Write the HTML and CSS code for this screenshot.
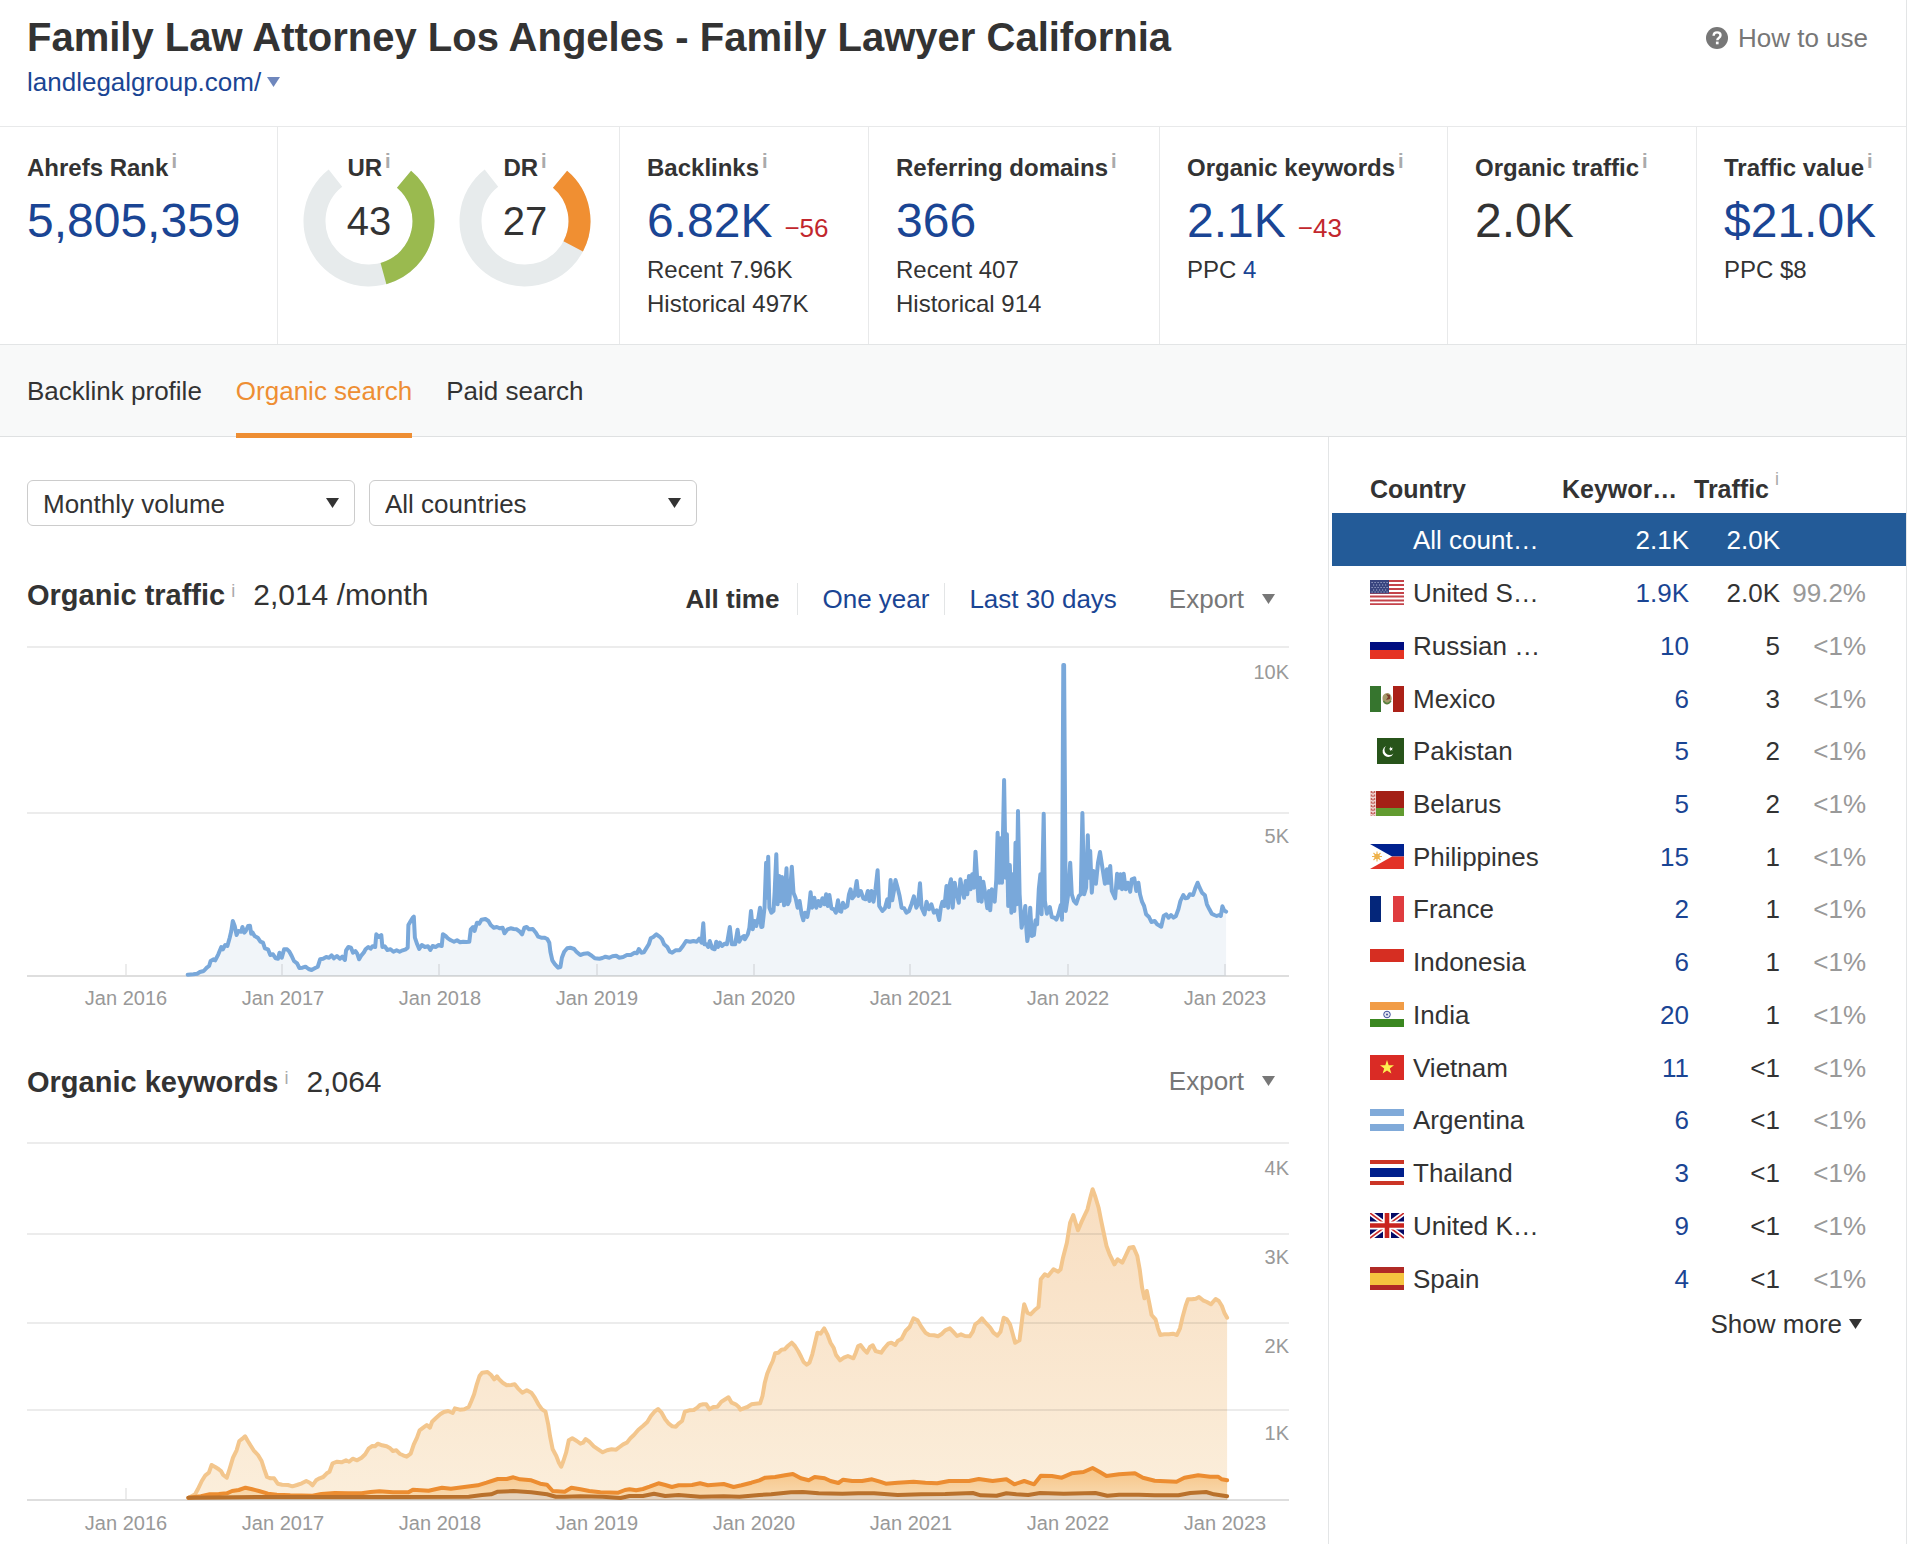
FILE: index.html
```html
<!DOCTYPE html>
<html lang="en">
<head>
<meta charset="utf-8">
<meta name="viewport" content="width=device-width, initial-scale=1">
<title>Family Law Attorney Los Angeles - Family Lawyer California</title>
<link rel="stylesheet" href="styles.css">
</head>
<body>
<div class="page">
  <header class="head">
    <div>
      <h1 class="title">Family Law Attorney Los Angeles - Family Lawyer California</h1>
      <a class="domain" href="#">landlegalgroup.com/ <svg class="caret" viewBox="0 0 13 10" aria-hidden="true"><path d="M0 0H13L6.500 10Z"/></svg></a>
    </div>
    <a class="help" href="#">
      <svg class="help-icon" viewBox="0 0 22 22" aria-hidden="true"><circle cx="11" cy="11" r="11" fill="#777"/><path d="M7.600 8.700C7.700 6.600 9 5.400 11.100 5.400C13.200 5.400 14.500 6.600 14.500 8.200C14.500 9.500 13.800 10.200 12.800 10.900C11.800 11.600 11.300 12 11.300 13.200" fill="none" stroke="#fff" stroke-width="2.400"/><rect x="9.900" y="14.600" width="2.700" height="2.700" fill="#fff"/></svg>
      How to use
    </a>
  </header>

  <section class="stats" aria-label="Overview">
    <div class="stat">
      <h2 class="label">Ahrefs Rank<sup class="info">i</sup></h2>
      <a class="value" href="#">5,805,359</a>
    </div>
    <div class="stat gauges">
      <div class="gauge">
        <svg class="ring" viewBox="0 0 132 136" aria-hidden="true"><path class="track" d="M101.030 26.250A54.500 54.500 0 1 1 32.450 25.050"/><path class="ur" d="M101.030 26.250A54.500 54.500 0 0 1 80.470 120.540"/></svg>
        <h2 class="label">UR<sup class="info">i</sup></h2>
        <span class="score">43</span>
      </div>
      <div class="gauge">
        <svg class="ring" viewBox="0 0 132 136" aria-hidden="true"><path class="track" d="M101.030 26.250A54.500 54.500 0 1 1 32.450 25.050"/><path class="dr" d="M101.030 26.250A54.500 54.500 0 0 1 114.200 93.400"/></svg>
        <h2 class="label">DR<sup class="info">i</sup></h2>
        <span class="score">27</span>
      </div>
    </div>
    <div class="stat">
      <h2 class="label">Backlinks<sup class="info">i</sup></h2>
      <div class="figure"><a class="value" href="#">6.82K</a><span class="drop">−56</span></div>
      <p class="note">Recent 7.96K</p>
      <p class="note">Historical 497K</p>
    </div>
    <div class="stat">
      <h2 class="label">Referring domains<sup class="info">i</sup></h2>
      <a class="value" href="#">366</a>
      <p class="note">Recent 407</p>
      <p class="note">Historical 914</p>
    </div>
    <div class="stat">
      <h2 class="label">Organic keywords<sup class="info">i</sup></h2>
      <div class="figure"><a class="value" href="#">2.1K</a><span class="drop">−43</span></div>
      <p class="note">PPC <a href="#">4</a></p>
    </div>
    <div class="stat">
      <h2 class="label">Organic traffic<sup class="info">i</sup></h2>
      <span class="value plain">2.0K</span>
    </div>
    <div class="stat">
      <h2 class="label">Traffic value<sup class="info">i</sup></h2>
      <a class="value" href="#">$21.0K</a>
      <p class="note">PPC $8</p>
    </div>
  </section>

  <nav class="tabs" aria-label="Reports">
    <a class="tab" href="#">Backlink profile</a>
    <a class="tab active" href="#" aria-current="page">Organic search</a>
    <a class="tab" href="#">Paid search</a>
  </nav>

  <div class="body">
    <main class="main">
      <form class="filters">
        <div class="picker">
          <select class="select" aria-label="Volume"><option>Monthly volume</option></select>
          <svg class="caret" viewBox="0 0 13 10" aria-hidden="true"><path d="M0 0H13L6.500 10Z"/></svg>
        </div>
        <div class="picker">
          <select class="select" aria-label="Country"><option>All countries</option></select>
          <svg class="caret" viewBox="0 0 13 10" aria-hidden="true"><path d="M0 0H13L6.500 10Z"/></svg>
        </div>
      </form>

      <section class="panel">
        <div class="panel-head with-ranges">
          <h2 class="heading">Organic traffic<sup class="info light">i</sup></h2>
          <span class="total">2,014 /month</span>
          <div class="tools">
            <div class="ranges">
              <button type="button" class="range current">All time</button>
              <button type="button" class="range">One year</button>
              <button type="button" class="range">Last 30 days</button>
            </div>
            <button type="button" class="export">Export <svg class="caret" viewBox="0 0 13 10" aria-hidden="true"><path d="M0 0H13L6.500 10Z"/></svg></button>
          </div>
        </div>
        <svg class="chart" viewBox="0 0 1262 380" role="img" aria-label="Organic traffic over time">
          <path class="area-traffic" data-area="traffic"/>
          <path class="grid" d="M0 6H1262M0 172H1262"/>
          <path class="axis" d="M0 335H1262"/>
          <path class="ticks" d="M99 323V334M255 323V334M412 323V334M570 323V334M727 323V334M883 323V334M1041 323V334M1198 323V334"/>
          <path class="line-traffic" data-line="traffic"/>
          <g class="y-labels"><text x="1262" y="38">10K</text><text x="1262" y="202">5K</text></g>
          <g class="x-labels"><text x="99" y="364">Jan 2016</text><text x="256" y="364">Jan 2017</text><text x="413" y="364">Jan 2018</text><text x="570" y="364">Jan 2019</text><text x="727" y="364">Jan 2020</text><text x="884" y="364">Jan 2021</text><text x="1041" y="364">Jan 2022</text><text x="1198" y="364">Jan 2023</text></g>
        </svg>
      </section>

      <section class="panel">
        <div class="panel-head">
          <h2 class="heading">Organic keywords<sup class="info light">i</sup></h2>
          <span class="total">2,064</span>
          <div class="tools">
            <button type="button" class="export">Export <svg class="caret" viewBox="0 0 13 10" aria-hidden="true"><path d="M0 0H13L6.500 10Z"/></svg></button>
          </div>
        </div>
        <svg class="chart" viewBox="0 0 1262 402" role="img" aria-label="Organic keywords over time">
          <defs>
            <linearGradient id="fade" x1="0" y1="0" x2="0" y2="1"><stop offset="0" stop-color="#f8dec1"/><stop offset="1" stop-color="#fbeedb"/></linearGradient>
            <linearGradient id="fade-mid" x1="0" y1="0" x2="0" y2="1"><stop offset="0" stop-color="#f6c384"/><stop offset="1" stop-color="#f9dcb4"/></linearGradient>
          </defs>
          <path fill="url(#fade)" data-area="all"/>
          <path fill="url(#fade-mid)" data-area="top10"/>
          <path fill="#e6d3bd" data-area="top3"/>
          <path class="grid" d="M0 6H1262M0 97H1262M0 186H1262M0 273H1262"/>
          <path class="axis" d="M0 363H1262"/>
          <path class="ticks" d="M99 351V362"/>
          <path class="line-all" data-line="all"/>
          <path class="line-top10" data-line="top10"/>
          <path class="line-top3" data-line="top3"/>
          <g class="y-labels"><text x="1262" y="38">4K</text><text x="1262" y="127">3K</text><text x="1262" y="216">2K</text><text x="1262" y="303">1K</text></g>
          <g class="x-labels"><text x="99" y="393">Jan 2016</text><text x="256" y="393">Jan 2017</text><text x="413" y="393">Jan 2018</text><text x="570" y="393">Jan 2019</text><text x="727" y="393">Jan 2020</text><text x="884" y="393">Jan 2021</text><text x="1041" y="393">Jan 2022</text><text x="1198" y="393">Jan 2023</text></g>
        </svg>
      </section>
    </main>

    <aside class="side">
      <table class="countries">
        <colgroup><col class="c-name"><col class="c-kw"><col class="c-tr"><col></colgroup>
        <thead>
          <tr><th class="th-name">Country</th><th>Keywor…</th><th class="th-tr" colspan="2">Traffic<sup class="info light high">i</sup></th></tr>
        </thead>
        <tbody>
          <tr class="selected"><td class="name"><span class="all">All count…</span></td><td class="num">2.1K</td><td class="num">2.0K</td><td></td></tr>
          <tr><td class="name"><svg class="flag" viewBox="0 0 34 26"><rect width="34" height="25" fill="#fff"/><path d="M0 1H34M0 5H34M0 9H34M0 13H34M0 16.500H34M0 20.500H34M0 24.200H34" stroke="#c4434a" stroke-width="1.800"/><rect width="19" height="13.500" fill="#39457f"/><path d="M1.500 2.500H18M3 5H18M1.500 7.500H18M3 10H18M1.500 12H18" stroke="#a9b0d0" stroke-width="1" stroke-dasharray="1.200 1.800"/></svg>United S…</td><td class="num"><a href="#">1.9K</a></td><td class="num">2.0K</td><td class="pct">99.2%</td></tr>
          <tr><td class="name"><svg class="flag" viewBox="0 0 34 26"><rect width="34" height="9" fill="#fff"/><rect y="9" width="34" height="8" fill="#000d80"/><rect y="17" width="34" height="9" fill="#e53323"/></svg>Russian …</td><td class="num"><a href="#">10</a></td><td class="num">5</td><td class="pct">&lt;1%</td></tr>
          <tr><td class="name"><svg class="flag" viewBox="0 0 34 26"><rect width="34" height="26" fill="#fff"/><rect width="11" height="26" fill="#36752e"/><rect x="23" width="11" height="26" fill="#ab2118"/><path d="M12.500 12C12.500 8 16 7 18 7C21.500 8 22 12 21.500 14C20 18.500 17 19 15 18C13 17 12.500 14 12.500 12Z" fill="#a59a6b"/><path d="M16 8L20 9L20 13L16 14L18 11Z" fill="#7c3f2c"/><path d="M13.500 15Q17 20 21 15" fill="none" stroke="#53823f" stroke-width="1.400"/></svg>Mexico</td><td class="num"><a href="#">6</a></td><td class="num">3</td><td class="pct">&lt;1%</td></tr>
          <tr><td class="name"><svg class="flag" viewBox="0 0 34 26"><rect x="7" width="27" height="26" fill="#27541a"/><path d="M16 8A5.700 5.700 0 1 0 23.500 15.500A5.200 5.200 0 1 1 16 8Z" fill="#fff"/><path d="M20.500 8.500L21.300 10L23 9.700L21.900 11L22.600 12.400L21.100 11.900L20.100 13L20.100 11.500L18.700 10.900L20.200 10.200Z" fill="#fff"/></svg>Pakistan</td><td class="num"><a href="#">5</a></td><td class="num">2</td><td class="pct">&lt;1%</td></tr>
          <tr><td class="name"><svg class="flag" viewBox="0 0 34 26"><rect width="34" height="17" fill="#a32016"/><rect y="17" width="34" height="8" fill="#629b30"/><rect width="6" height="25" fill="#f0d5d3"/><path d="M1.500 0V25M4.500 0V25" stroke="#c4625c" stroke-width="1.400" stroke-dasharray="2 1.500"/><path d="M3 1V25" stroke="#c4625c" stroke-width="1.400" stroke-dasharray="1.500 2"/></svg>Belarus</td><td class="num"><a href="#">5</a></td><td class="num">2</td><td class="pct">&lt;1%</td></tr>
          <tr><td class="name"><svg class="flag" viewBox="0 0 34 26"><rect width="34" height="12.500" fill="#00218f"/><rect y="12.500" width="34" height="12.500" fill="#e23227"/><path d="M0 0L22 12.500L0 25Z" fill="#fff"/><circle cx="7" cy="12.500" r="2.800" fill="#eeb24c"/><path d="M7 7.500V17.500M2 12.500H12M3.500 9L10.500 16M10.500 9L3.500 16" stroke="#eeb24c" stroke-width="1.100"/></svg>Philippines</td><td class="num"><a href="#">15</a></td><td class="num">1</td><td class="pct">&lt;1%</td></tr>
          <tr><td class="name"><svg class="flag" viewBox="0 0 34 26"><rect width="34" height="26" fill="#fff"/><rect width="11" height="26" fill="#04267a"/><rect x="23" width="11" height="26" fill="#df3c3f"/></svg>France</td><td class="num"><a href="#">2</a></td><td class="num">1</td><td class="pct">&lt;1%</td></tr>
          <tr><td class="name"><svg class="flag" viewBox="0 0 34 26"><rect width="34" height="13" fill="#d62e22"/><rect y="13" width="34" height="12" fill="#fff"/></svg>Indonesia</td><td class="num"><a href="#">6</a></td><td class="num">1</td><td class="pct">&lt;1%</td></tr>
          <tr><td class="name"><svg class="flag" viewBox="0 0 34 26"><rect width="34" height="8" fill="#f19c46"/><rect y="8" width="34" height="9" fill="#fff"/><rect y="17" width="34" height="8" fill="#3a8720"/><circle cx="17" cy="12.500" r="3.300" fill="#e4e7f1" stroke="#3e4f9c" stroke-width="1"/><circle cx="17" cy="12.500" r="1" fill="#3e4f9c"/></svg>India</td><td class="num"><a href="#">20</a></td><td class="num">1</td><td class="pct">&lt;1%</td></tr>
          <tr><td class="name"><svg class="flag" viewBox="0 0 34 26"><rect width="34" height="25" fill="#da2b25"/><path d="M17 5L18.700 10.300H24L19.800 13.400L21.400 18.600L17 15.400L12.600 18.600L14.200 13.400L10 10.300H15.300Z" fill="#fdf050"/></svg>Vietnam</td><td class="num"><a href="#">11</a></td><td class="num">&lt;1</td><td class="pct">&lt;1%</td></tr>
          <tr><td class="name"><svg class="flag" viewBox="0 0 34 26"><rect y="2" width="34" height="7" fill="#80aad9"/><rect y="9" width="34" height="8" fill="#fff"/><rect y="17" width="34" height="7" fill="#80aad9"/></svg>Argentina</td><td class="num"><a href="#">6</a></td><td class="num">&lt;1</td><td class="pct">&lt;1%</td></tr>
          <tr><td class="name"><svg class="flag" viewBox="0 0 34 26"><rect width="34" height="25" fill="#fff"/><rect width="34" height="4" fill="#cb3526"/><rect y="8" width="34" height="9" fill="#001f8c"/><rect y="21" width="34" height="4" fill="#cb3526"/></svg>Thailand</td><td class="num"><a href="#">3</a></td><td class="num">&lt;1</td><td class="pct">&lt;1%</td></tr>
          <tr><td class="name"><svg class="flag" viewBox="0 0 34 26"><rect width="34" height="25" fill="#050a66"/><path d="M0 0L34 25M34 0L0 25" stroke="#fff" stroke-width="5"/><path d="M0 0L34 25M34 0L0 25" stroke="#c92c2b" stroke-width="1.600"/><path d="M17 0V25M0 12.500H34" stroke="#fff" stroke-width="8"/><path d="M17 0V25M0 12.500H34" stroke="#c9241f" stroke-width="4.600"/></svg>United K…</td><td class="num"><a href="#">9</a></td><td class="num">&lt;1</td><td class="pct">&lt;1%</td></tr>
          <tr><td class="name"><svg class="flag" viewBox="0 0 34 26"><rect y="1" width="34" height="23" fill="#b02a26"/><rect y="7" width="34" height="12" fill="#f5c53f"/></svg>Spain</td><td class="num"><a href="#">4</a></td><td class="num">&lt;1</td><td class="pct">&lt;1%</td></tr>
        </tbody>
      </table>
      <button type="button" class="more">Show more <svg class="caret" viewBox="0 0 13 10" aria-hidden="true"><path d="M0 0H13L6.500 10Z"/></svg></button>
    </aside>
  </div>
</div>
<script src="charts.js"></script>
</body>
</html>
```
FILE: styles.css
```css
* { box-sizing: border-box; }
body {
  margin: 0;
  background: #fff;
  color: #333;
  font-family: "Liberation Sans", Arial, sans-serif;
  font-size: 26px;
  line-height: 30px;
}
h1, h2, p { margin: 0; }
a { color: #1a4594; text-decoration: none; }
button {
  margin: 0;
  padding: 0;
  border: 0;
  background: none;
  color: inherit;
  font: inherit;
  cursor: pointer;
}
.page {
  display: flex;
  flex-direction: column;
  min-height: 100vh;
  margin-right: 3px;
  border-right: 1px solid #e3e5e6;
}
.caret { width: 13px; height: 10px; fill: currentColor; }
.info {
  margin-left: 3px;
  color: #aaa;
  font-size: 20px;
  font-weight: 700;
  line-height: 0;
  vertical-align: 8px;
}
.info.light { margin-left: 6px; font-size: 18px; font-weight: 400; }
.info.high { vertical-align: 13px; }

.head {
  display: flex;
  justify-content: space-between;
  align-items: flex-start;
  padding: 13px 38px 29px 27px;
  border-bottom: 1px solid #e8e9ea;
}
.title { margin-bottom: 6px; font-size: 40px; line-height: 48px; }
.domain { display: flex; align-items: center; gap: 6px; }
.domain .caret { color: #6f87bd; }
.help { display: flex; align-items: center; gap: 10px; margin-top: 10px; color: #777; }
.help-icon { width: 22px; height: 22px; }

.stats {
  display: grid;
  grid-template-columns: 278fr 342fr 249fr 291fr 288fr 249fr 209fr;
  border-bottom: 1px solid #e3e5e6;
}
.stat { min-width: 0; padding: 26px 0 23px 27px; border-right: 1px solid #e8e9ea; white-space: nowrap; }
.stat:last-child { border-right: 0; }
.label { font-size: 24px; line-height: 30px; }
.value { display: block; margin: 10px 0 4px; font-size: 48px; line-height: 56px; }
.plain { color: #333; }
.figure { display: flex; align-items: baseline; gap: 12px; }
.drop { color: #c2272d; }
.note { font-size: 24px; line-height: 34px; }
.gauges { display: flex; gap: 24px; padding-left: 25px; }
.gauge { display: grid; justify-items: center; align-self: flex-start; }
.gauge > * { grid-area: 1 / 1; }
.ring { width: 132px; height: 136px; fill: none; stroke-width: 22; }
.track { stroke: #e7ebec; }
.ur { stroke: #9aba4f; }
.dr { stroke: #f08f32; }
.score { align-self: center; font-size: 40px; line-height: 46px; }

.tabs {
  display: flex;
  gap: 34px;
  padding: 0 27px;
  background: #f8f9f9;
  border-bottom: 1px solid #dfe1e2;
}
.tab {
  padding: 31px 0 27px;
  margin-bottom: -2px;
  border-bottom: 5px solid transparent;
  color: #333;
}
.tab.active { color: #ee8e33; border-color: #ee8e33; }

.body { display: grid; grid-template-columns: minmax(0, 1fr) 578px; flex: 1; }
.main { padding: 43px 39px 0 27px; }
.filters { display: flex; gap: 14px; margin-bottom: 52px; }
.picker { display: grid; align-items: center; width: 328px; }
.picker > * { grid-area: 1 / 1; }
.picker .caret { justify-self: end; margin-right: 16px; pointer-events: none; }
.select {
  width: 100%;
  height: 46px;
  padding: 2px 40px 0 15px;
  border: 1px solid #ccc;
  border-radius: 6px;
  background: #fff;
  color: inherit;
  font: inherit;
  appearance: none;
}

.panel { margin-bottom: 44px; }
.panel:last-child { margin-bottom: 0; }
.panel-head { display: flex; align-items: flex-start; margin-bottom: 38px; line-height: 34px; }
.with-ranges { margin-bottom: 26px; }
.with-ranges .tools { margin-top: 5px; }
.heading { margin-right: 18px; font-size: 29px; line-height: 34px; }
.total { font-size: 30px; }
.tools { display: flex; gap: 26px; margin-left: auto; line-height: 32px; }
.ranges { display: flex; }
.range { padding: 0 26px 0 24px; border-left: 1px solid #e3e5e6; color: #1a4594; line-height: 32px; }
.range:first-child { padding: 0 18px; border-left: 0; }
.range:nth-child(2) { padding-right: 15px; }
.range.current { color: #333; font-weight: 700; }
.export { display: flex; align-items: center; gap: 18px; margin-right: 14px; color: #777; line-height: 32px; }

.chart { display: block; width: 100%; height: auto; fill: none; stroke-linejoin: round; stroke-linecap: round; }
.grid, .axis, .ticks { stroke-width: 2; stroke-linecap: butt; }
.grid, .ticks { stroke: rgba(0, 0, 0, .075); }
.axis { stroke: rgba(0, 0, 0, .13); }
.area-traffic { fill: #f1f5f9; }
.line-traffic, .line-all, .line-top10, .line-top3 { stroke-width: 4; }
.line-traffic { stroke: #79a8da; }
.line-all { stroke: #f3c68d; }
.line-top10 { stroke: #ec8d31; }
.line-top3 { stroke: #b9712c; }
.x-labels, .y-labels { fill: #999; font-size: 20px; }
.x-labels { text-anchor: middle; }
.y-labels { text-anchor: end; }

.side { padding: 34px 0 0 3px; border-left: 1px solid #e3e5e6; }
.countries { width: 100%; height: 833px; border-collapse: collapse; table-layout: fixed; white-space: nowrap; }
.c-name { width: 230px; }
.c-kw { width: 127px; }
.c-tr { width: 91px; }
.countries th { height: 42px; padding: 0 0 6px; font-size: 25px; line-height: 36px; text-align: left; }
.countries .th-name { padding-left: 38px; }
.countries .th-tr { padding-left: 5px; }
.countries td { padding: 2px 0 0; text-align: right; }
.countries .name { padding-left: 38px; text-align: left; }
.flag { width: 34px; height: 26px; margin-right: 9px; vertical-align: -4px; }
.all { padding-left: 43px; }
.countries .pct { padding-right: 40px; color: #999; }
.selected { background: #235b98; color: #fff; }
.more { display: flex; align-items: center; gap: 7px; margin: 4px 44px 0 auto; line-height: 32px; }
```
FILE: charts.js
```js
// Each series is a list of segments; a segment has its own origin and x step.
var series = {
  traffic: { base: 335, parts: [
    { x: 153, y: 180, k: 600 / 1568, pts: "20,461 35,460 45,458 52,453 62,450 70,440 76,435 80,420 88,415 92,418 100,400 108,378 112,385 118,372 124,375 130,350 134,330 138,300 143,315 148,342 153,330 160,332 163,318 168,335 172,330 178,315 183,314 186,338 190,335 195,345 203,350 210,362 217,365 222,382 230,385 236,402 243,400 250,412 256,413 260,395 266,410 272,385 280,385 286,392 292,405 298,420 306,427 312,441 320,440 328,437 336,444 344,447 352,442 360,437 366,415 374,413 382,408 390,410 396,403 402,412 410,405 418,413 424,407 431,417 434,388 440,378 447,380 452,395 458,390 463,398 468,415 474,403 480,395 485,385 492,378 498,383 503,376 510,378 513,340 520,348 526,342 529,378 535,376 542,387 550,385 558,392 566,388 574,392 582,388 590,385 595,380 597,312 603,300 608,290 611,287 614,350 620,370 625,384 632,372 640,378 648,376 654,387 660,375 668,378 676,372 684,375 687,340 694,345 700,352 708,358 716,362 724,358 732,364 740,362 748,363 756,362 760,325 766,318 770,330 776,305 782,308 788,296 798,294 806,300 812,312 820,320 828,318 836,322 843,320 848,337 856,325 864,322 872,324 880,325 888,332 894,340 900,320 906,318 912,325 922,324 930,335 936,347 944,350 952,350 960,354 965,365 968,392 973,418 980,430 988,440 994,438 998,410 1004,392 1012,382 1020,380 1030,384 1036,392 1046,402 1056,398 1066,397 1076,404 1084,412 1096,413 1104,411 1112,407 1122,410 1130,406 1140,404 1148,410 1158,408 1168,402 1178,402 1188,395 1194,397 1199,384 1206,395 1212,394 1218,383 1225,370 1230,352 1237,348 1245,340 1252,346" },
    { x: 633, y: -80, k: 640 / 1568, pts: "0,1128 5,1135 10,1150 18,1158 24,1172 30,1175 38,1168 48,1168 56,1155 64,1140 74,1142 82,1140 90,1142 96,1133 102,1145 106,1087 109,1150 114,1150 118,1158 122,1140 128,1162 134,1165 138,1142 142,1158 147,1145 152,1155 158,1148 164,1150 171,1098 176,1150 184,1150 190,1106 194,1142 200,1130 206,1125 208,1135 215,1120 219,1100 223,1050 227,1105 232,1080 236,1095 241,1070 245,1040 248,1098 251,1097 256,1040 260,905 262,1010 265,887 268,1040 273,1055 278,1050 281,990 285,880 288,1030 292,945 296,1020 299,948 304,1033 310,922 313,1030 317,1020 323,917 327,995 332,1010 337,1040 342,1020 347,1060 351,1078 355,1055 361,1068 365,1040 369,994 373,1040 378,1010 383,1040 388,1020 393,1035 398,1012 403,1030 407,1000 411,1035 415,1002 420,1042 426,1045 431,1055 436,1018 440,1050 444,1052 448,1025 453,1040 459,1035 463,1000 467,985 471,1012 476,1005 482,960 486,1005 492,990 498,1012 504,1015 509,990 513,1020 518,990 523,1022 528,985 533,928 537,1035 545,1050 551,1042 557,1015 561,1038 565,957 569,1018 573,990 577,957 582,980 587,1005 592,1040 598,1042 604,1055 610,1050 616,1030 622,1006 628,1040 632,1030 637,967 641,1040 648,1060 653,1022 659,1045 665,1030 671,1055 678,1048 684,1077 688,1040 692,1022 697,1035 702,975 706,1040 709,975 713,955 717,1040 722,965 727,1000 732,1025 736,955 740,985 745,1010 749,960 753,1000 757,945 761,985 765,940 769,980 773,872 777,950 780,1020 784,950 788,1022 792,962 797,1000 802,1042 806,990 809,1048 813,985 817,1000 820,1022 824,955 827,815 831,965 834,832 838,965 843,657 847,950 850,820 853,1035 857,912 861,1055 864,940 868,1050 871,845 874,1030 877,750 881,1000 886,1100 890,1075 895,1035 898,1110 900,1140 904,1110 907,1040 911,1125 916,1122 920,1078 924,1090 928,985 932,940 935,1060 940,758 943,1020 948,1058 955,1038 960,1068 966,1070 971,1076 976,1060 982,1032 985,1076 988,312 990,312 994,1050 1000,1000 1005,905 1009,1000 1014,1020 1020,1028 1026,1005 1031,1000 1035,756 1039,1000 1044,980 1048,823 1051,950 1054,870 1058,995 1062,930 1068,968 1073,905 1078,873 1083,912 1090,968 1095,925 1098,965 1103,915 1107,990 1115,1012 1120,938 1124,980 1128,940 1132,985 1136,938 1141,985 1146,965 1152,992 1156,955 1162,952 1167,990 1172,965 1176,1000 1181,1022 1186,1035 1191,1060 1198,1068 1204,1083 1212,1080 1218,1090 1228,1097 1234,1065 1240,1060 1246,1070 1252,1062 1258,1070 1264,1065 1270,1045 1275,1020 1282,1002 1287,1012 1293,1010 1298,1000 1306,1002 1312,980 1317,965 1322,980 1328,995 1335,1003 1340,1030 1346,1045 1352,1058 1358,1062 1364,1065 1370,1062 1374,1065 1378,1036 1382,1048 1387,1052" }
  ] },
  all: { base: 363, parts: [
    { x: -27, y: -96, k: 700 / 1568, pts: "422,1371 437,1360 443,1345 452,1320 460,1303 468,1295 474,1272 482,1278 490,1285 495,1290 500,1302 508,1310 514,1285 522,1250 530,1228 536,1200 543,1193 549,1186 555,1200 562,1215 568,1228 578,1242 586,1260 592,1285 598,1308 606,1312 614,1312 622,1328 632,1331 645,1332 655,1336 665,1332 676,1327 686,1320 694,1325 700,1333 708,1318 716,1312 724,1308 732,1297 738,1292 745,1267 755,1262 765,1264 775,1258 782,1262 790,1253 800,1258 810,1250 818,1240 826,1222 834,1215 840,1216 846,1208 856,1213 866,1216 874,1222 880,1230 888,1228 895,1238 903,1243 911,1247 920,1238 927,1210 934,1190 940,1168 948,1160 956,1152 963,1160 968,1142 976,1132 986,1120 994,1113 1004,1110 1014,1116 1019,1102 1030,1106 1040,1105 1050,1098 1056,1080 1062,1060 1068,1030 1074,1005 1080,995 1092,993 1100,1002 1107,1015 1113,1006 1118,1015 1126,1025 1135,1033 1145,1032 1153,1030 1160,1042 1170,1055 1180,1048 1190,1055 1198,1070 1206,1090 1214,1105 1222,1112 1228,1150 1232,1185 1238,1225 1246,1245 1252,1265 1257,1277 1262,1260 1268,1235 1274,1198 1282,1192 1292,1200 1300,1208 1306,1205 1312,1194 1320,1202 1330,1216 1340,1225 1350,1234 1360,1228 1370,1225 1380,1226 1388,1218 1396,1210 1404,1205 1412,1192 1420,1182 1430,1166 1440,1155 1450,1143 1458,1125 1466,1112 1474,1104 1482,1115 1490,1135 1498,1148 1506,1156 1514,1157 1520,1148 1528,1140 1534,1112 1544,1108 1554,1107 1562,1100" },
    { x: 673, y: -96, k: 620 / 1568, pts: "0,1092 8,1090 16,1090 24,1105 34,1098 44,1097 54,1082 64,1075 72,1069 80,1085 90,1090 98,1098 102,1106 110,1102 120,1098 130,1090 140,1088 152,1087 158,1065 164,1025 170,998 178,975 184,960 190,937 198,935 206,926 214,925 222,915 232,905 240,915 248,930 256,948 262,963 270,971 277,965 284,940 290,910 297,875 305,878 314,862 322,880 330,905 338,920 344,942 354,958 364,950 374,945 388,952 394,935 400,915 406,912 414,925 422,935 430,918 437,913 444,930 458,935 466,922 476,908 484,905 494,912 500,900 510,893 520,870 530,858 540,832 550,838 560,858 570,875 580,882 592,883 602,886 612,878 620,868 632,862 640,872 650,885 660,880 670,885 682,886 690,872 696,850 704,843 713,832 722,845 734,860 742,875 752,884 760,872 768,830 776,835 784,850 790,875 797,905 808,898 812,860 816,820 820,790 828,815 836,820 846,808 856,798 862,715 872,700 880,705 894,685 906,692 912,685 918,650 928,605 936,545 944,522 950,545 956,568 964,545 972,525 980,505 987,470 993,445 1000,468 1008,500 1014,535 1020,570 1028,615 1036,640 1048,670 1056,655 1068,665 1076,645 1086,620 1096,618 1106,645 1112,685 1118,740 1124,772 1130,750 1136,785 1142,822 1152,835 1158,862 1164,882 1174,880 1186,880 1196,878 1206,882 1214,862 1220,830 1228,795 1234,775 1244,775 1254,773 1262,768 1272,778 1282,783 1292,790 1304,774 1312,780 1320,795 1326,815 1333,830" }
  ] },
  top10: { base: 363, parts: [
    { x: -27, y: -96, k: 700 / 1568, pts: "422,1370 450,1366 470,1360 490,1359 508,1357 520,1350 535,1347 550,1340 565,1345 580,1350 600,1358 620,1361 650,1363 700,1364 720,1359 750,1356 780,1357 810,1357 830,1353 850,1351 880,1354 915,1354 925,1346 960,1349 990,1340 1010,1343 1040,1338 1070,1333 1090,1325 1115,1314 1135,1314 1150,1309 1165,1315 1190,1318 1210,1328 1225,1331 1238,1350 1265,1352 1280,1340 1300,1345 1320,1350 1345,1354 1385,1355 1400,1347 1410,1345 1425,1348 1440,1344 1455,1337 1475,1327 1490,1332 1505,1338 1520,1333 1535,1333 1550,1332" },
    { x: 673, y: -96, k: 620 / 1568, pts: "0,1327 20,1333 60,1329 85,1338 105,1333 130,1325 150,1318 165,1310 190,1308 215,1303 235,1299 255,1312 275,1318 290,1308 315,1312 330,1320 350,1326 362,1316 385,1320 410,1320 435,1315 455,1322 470,1328 500,1325 540,1322 570,1325 600,1327 630,1320 680,1320 705,1314 740,1320 775,1315 795,1330 820,1320 845,1330 862,1304 890,1305 915,1310 940,1297 970,1293 993,1281 1010,1292 1028,1305 1060,1300 1100,1297 1120,1310 1150,1319 1205,1322 1225,1310 1260,1303 1290,1307 1310,1307 1320,1315 1333,1318" }
  ] },
  top3: { base: 363, parts: [
    { x: -27, y: -96, k: 700 / 1568, pts: "422,1370 600,1368 900,1368 1050,1367 1080,1362 1100,1360 1115,1352 1150,1350 1190,1354 1225,1360 1245,1367 1265,1367 1300,1366 1350,1367 1390,1371 1410,1365 1440,1365 1465,1358 1490,1365 1520,1362" },
    { x: 673, y: -96, k: 620 / 1568, pts: "0,1367 60,1366 100,1367 150,1362 180,1360 230,1354 260,1353 300,1357 360,1358 400,1357 440,1357 500,1362 560,1360 620,1359 690,1356 710,1363 750,1364 775,1357 800,1360 830,1362 860,1356 920,1358 1000,1356 1030,1364 1060,1361 1110,1361 1150,1363 1210,1363 1240,1356 1280,1353 1300,1360 1333,1366" }
  ] }
};

Object.keys(series).forEach(function (name) {
  var points = [];
  series[name].parts.forEach(function (part) {
    part.pts.split(" ").forEach(function (pair) {
      var p = pair.split(",");
      points.push([(part.x + p[0] * part.k).toFixed(1), (part.y + p[1] / 3).toFixed(1)]);
    });
  });
  var line = "M" + points.join("L");
  var area = line + "V" + series[name].base + "H" + points[0][0] + "Z";
  document.querySelector('[data-line="' + name + '"]').setAttribute("d", line);
  document.querySelector('[data-area="' + name + '"]').setAttribute("d", area);
});
```
